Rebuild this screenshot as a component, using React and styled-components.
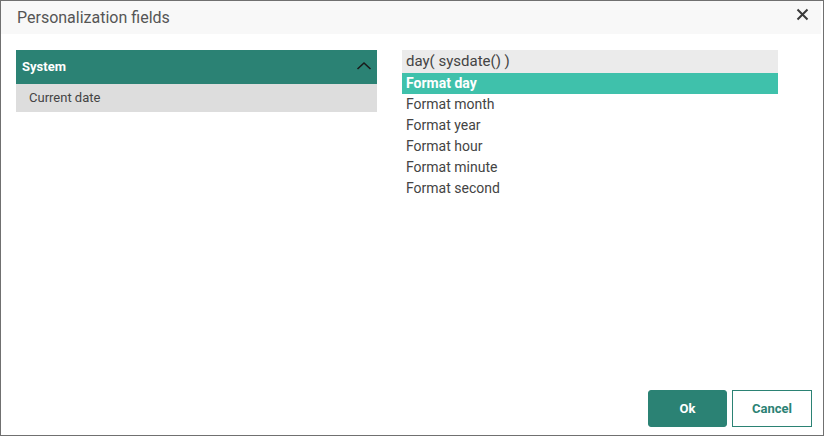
import styled, { createGlobalStyle } from "styled-components";

const GlobalStyle = createGlobalStyle`
  html, body {
    margin: 0;
    padding: 0;
    background: #ffffff;
  }
  body {
    font-family: Roboto, "Liberation Sans", sans-serif;
  }
`;

const formats = [
  "Format day",
  "Format month",
  "Format year",
  "Format hour",
  "Format minute",
  "Format second",
];

function App() {
  return (
    <>
      <GlobalStyle />
      <StyledDialog>
        <StyledHeader>
          <h1>Personalization fields</h1>
          <CloseButton aria-label="close">
            <svg width="13" height="13" viewBox="0 0 13 13">
              <path
                d="M1.5 1.5 L11.5 11.5 M11.5 1.5 L1.5 11.5"
                stroke="#3a3a3a"
                strokeWidth="2"
                fill="none"
              />
            </svg>
          </CloseButton>
        </StyledHeader>
        <StyledBody>
          <LeftPanel>
            <GroupHeader>
              <span>System</span>
              <svg width="16" height="10" viewBox="0 0 16 10">
                <path
                  d="M1.5 8 L8 2 L14.5 8"
                  stroke="#1a1a1a"
                  strokeWidth="1.6"
                  fill="none"
                />
              </svg>
            </GroupHeader>
            <GroupItem>Current date</GroupItem>
          </LeftPanel>
          <RightPanel>
            <Expression>day( sysdate() )</Expression>
            {formats.map((f, i) => (
              <FormatRow key={f} $active={i === 0}>
                {f}
              </FormatRow>
            ))}
          </RightPanel>
        </StyledBody>
        <StyledFooter>
          <Button $primary>Ok</Button>
          <Button>Cancel</Button>
        </StyledFooter>
      </StyledDialog>
    </>
  );
}

const StyledDialog = styled.div`
  width: 824px;
  height: 436px;
  box-sizing: border-box;
  border: 1px solid #707070;
  background: #ffffff;
  display: flex;
  flex-direction: column;
`;

const StyledHeader = styled.div`
  height: 33px;
  background: #f8f8f8;
  margin-right: 2px;
  display: flex;
  align-items: center;
  justify-content: space-between;
  padding: 0 12px 0 16px;
  h1 {
    margin: 0;
    font-size: 16px;
    font-weight: 400;
    color: #555555;
  }
`;

const CloseButton = styled.div`
  display: flex;
  align-items: center;
  margin-top: -7px;
`;

const StyledBody = styled.div`
  flex: 1;
  display: flex;
  padding: 16px 0 0 15px;
  gap: 25px;
`;

const LeftPanel = styled.div`
  width: 361px;
  display: flex;
  flex-direction: column;
`;

const GroupHeader = styled.div`
  height: 34px;
  box-sizing: border-box;
  padding: 0 5px 2px 6px;
  background: #2b8274;
  display: flex;
  align-items: center;
  justify-content: space-between;
  span {
    color: #ffffff;
    font-weight: 700;
    font-size: 13px;
  }
`;

const GroupItem = styled.div`
  height: 28px;
  box-sizing: border-box;
  padding: 0 0 2px 13px;
  background: #dddddd;
  display: flex;
  align-items: center;
  font-size: 13px;
  color: #444444;
`;

const RightPanel = styled.div`
  width: 376px;
  display: flex;
  flex-direction: column;
`;

const Expression = styled.div`
  height: 23px;
  box-sizing: border-box;
  padding: 0 0 1px 4px;
  background: #ebebeb;
  display: flex;
  align-items: center;
  font-size: 15px;
  color: #444444;
`;

const FormatRow = styled.div`
  height: 21px;
  box-sizing: border-box;
  padding: 0 0 1px 4px;
  display: flex;
  align-items: center;
  font-size: 14px;
  background: ${({ $active }) => ($active ? "#3fc1ab" : "transparent")};
  color: ${({ $active }) => ($active ? "#ffffff" : "#444444")};
  font-weight: ${({ $active }) => ($active ? 700 : 400)};
`;

const StyledFooter = styled.div`
  display: flex;
  justify-content: flex-end;
  gap: 5px;
  padding: 0 11px 8px 0;
`;

const Button = styled.button`
  width: ${({ $primary }) => ($primary ? "79px" : "80px")};
  height: 37px;
  box-sizing: border-box;
  padding: 0 0 1px;
  font-family: Roboto, "Liberation Sans", sans-serif;
  font-size: 13px;
  font-weight: 700;
  border-radius: ${({ $primary }) => ($primary ? "3px" : "0")};
  border: 1px solid #2b8274;
  background: ${({ $primary }) => ($primary ? "#2b8274" : "#ffffff")};
  color: ${({ $primary }) => ($primary ? "#ffffff" : "#2b8274")};
  cursor: pointer;
`;

export default App;
